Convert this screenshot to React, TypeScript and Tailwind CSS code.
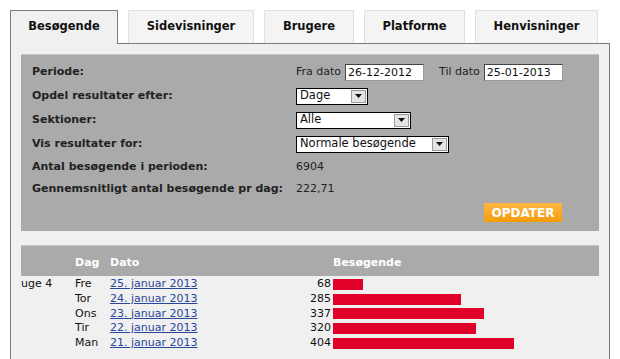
const tabs = ["Besøgende", "Sidevisninger", "Brugere", "Platforme", "Henvisninger"];
const tabWidths = ["w-[108px]", "w-[126px]", "w-[90px]", "w-[101px]", "w-[123px]"];

const rows = [
  { week: "uge 4", day: "Fre", date: "25. januar 2013", count: 68 },
  { week: "", day: "Tor", date: "24. januar 2013", count: 285 },
  { week: "", day: "Ons", date: "23. januar 2013", count: 337 },
  { week: "", day: "Tir", date: "22. januar 2013", count: 320 },
  { week: "", day: "Man", date: "21. januar 2013", count: 404 },
];

function Select({ value, width }: { value: string; width: string }) {
  return (
    <div className={`${width} h-[17px] bg-white border border-black flex items-center justify-between`}>
      <span className="pl-[3px] text-[11.5px] leading-none text-[#111]">{value}</span>
      <span className="w-[15px] h-[13px] mr-px bg-[#e4e4e4] border border-[#9a9a9a] flex items-center justify-center">
        <svg width="7" height="4" viewBox="0 0 7 4">
          <path d="M0 0h7L3.5 4z" fill="#111" />
        </svg>
      </span>
    </div>
  );
}

function DateInput({ value }: { value: string }) {
  return (
    <div className="w-[79px] h-[17px] bg-white border border-[#444] border-r-[#999] border-b-[#999] flex items-center pl-[2px] text-[11px] leading-none text-[#111]">
      {value}
    </div>
  );
}

export default function App() {
  return (
    <div className="w-[620px] h-[359px] overflow-hidden bg-white text-[11px] text-[#222] font-['DejaVu_Sans',Verdana,sans-serif]">
      <div className="pt-[10px] pl-[10px]">
        <div className="flex gap-[10px] h-[33px]">
          {tabs.map((t, i) => (
            <div
              key={t}
              className={
                i === 0
                  ? `${tabWidths[i]} h-[34px] pb-px bg-[#f0f0f0] border border-b-0 border-[#7a7a7a] flex items-center justify-center font-bold text-[11.5px] text-[#111] relative z-10`
                  : `${tabWidths[i]} h-[33px] bg-[#f4f4f4] border border-b-0 border-[#e0e0e0] flex items-center justify-center font-bold text-[11.5px] text-[#111]`
              }
            >
              {t}
            </div>
          ))}
        </div>
        <div className="w-[600px] h-[400px] bg-[#f0f0f0] border border-[#7a7a7a] px-[10px] pt-[10px]">
          <div className="bg-[#aaaaaa] border-t border-[#c4c4c4] pl-[11px] pt-[5px] pb-[9px]">
            <div className="flex h-[24px] items-center">
              <div className="w-[264px] font-bold">Periode:</div>
              <span className="mr-[4px]">Fra dato</span>
              <DateInput value="26-12-2012" />
              <span className="ml-[15px] mr-[4px]">Til dato</span>
              <DateInput value="25-01-2013" />
            </div>
            <div className="flex h-[24px] items-center">
              <div className="w-[264px] font-bold">Opdel resultater efter:</div>
              <Select value="Dage" width="w-[72px]" />
            </div>
            <div className="flex h-[24px] items-center">
              <div className="w-[264px] font-bold">Sektioner:</div>
              <Select value="Alle" width="w-[115px]" />
            </div>
            <div className="flex h-[24px] items-center">
              <div className="w-[264px] font-bold">Vis resultater for:</div>
              <Select value="Normale besøgende" width="w-[153px]" />
            </div>
            <div className="flex h-[23px] items-center">
              <div className="w-[264px] font-bold">Antal besøgende i perioden:</div>
              <span>6904</span>
            </div>
            <div className="flex h-[21px] items-center">
              <div className="w-[264px] font-bold">Gennemsnitligt antal besøgende pr dag:</div>
              <span>222,71</span>
            </div>
            <div className="mt-[3px] ml-[452px] w-[78px] h-[19px] bg-gradient-to-b from-[#ffb640] to-[#f49b00] text-white font-bold text-[12px] flex items-center justify-center">
              OPDATER
            </div>
          </div>

          <div className="mt-[14px] h-[31px] bg-[#aaaaaa] border-t border-[#c4c4c4] flex items-center pt-[4px] font-bold text-[11px] text-white">
            <div className="w-[54px]" />
            <div className="w-[35px]">Dag</div>
            <div className="w-[223px]">Dato</div>
            <div>Besøgende</div>
          </div>
          <div className="pt-px">
            {rows.map((r) => (
              <div key={r.date} className="flex items-center h-[14.75px] text-[11px] text-[#111]">
                <div className="w-[54px]">{r.week}</div>
                <div className="w-[35px]">{r.day}</div>
                <div className="w-[160px]">
                  <a className="text-[#26479a] underline">{r.date}</a>
                </div>
                <div className="w-[61px] text-right">{r.count}</div>
                <div className="ml-[2px] h-[11px] bg-[#e0002a]" style={{ width: r.count * 0.448 }} />
              </div>
            ))}
          </div>
        </div>
      </div>
    </div>
  );
}
